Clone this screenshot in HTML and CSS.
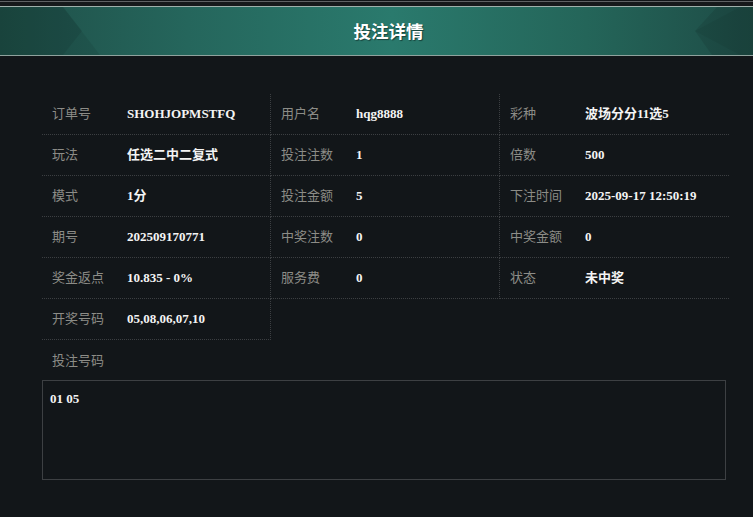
FILE: index.html
```html
<!DOCTYPE html>
<html lang="zh">
<head>
<meta charset="utf-8">
<link rel="stylesheet" href="styles.css">
</head>
<body>
<div class="page">
  <div class="topbar"></div>
  <div class="header">
    <svg class="deco" width="753" height="48" viewBox="0 0 753 48" preserveAspectRatio="none">
      <polygon points="0,0 63,0 100,48 0,48" fill="#000" fill-opacity="0.07"/>
      <polygon points="0,0 63,0 82,24 63,48 0,48" fill="#000" fill-opacity="0.08"/>
      <polygon points="753,0 717,0 695,24 712,48 753,48" fill="#000" fill-opacity="0.09"/>
      <polygon points="753,0 740,0 695,24 740,48 753,48" fill="#000" fill-opacity="0.05"/>
    </svg>
    <h1 class="title">投注详情</h1>
  </div>
  <div class="content">
    <div class="grid">
      <div class="cell c1"><span class="lbl">订单号</span><span class="val">SHOHJOPMSTFQ</span></div>
      <div class="cell c2"><span class="lbl">用户名</span><span class="val">hqg8888</span></div>
      <div class="cell c3"><span class="lbl">彩种</span><span class="val">波场分分11选5</span></div>

      <div class="cell c1"><span class="lbl">玩法</span><span class="val">任选二中二复式</span></div>
      <div class="cell c2"><span class="lbl">投注注数</span><span class="val">1</span></div>
      <div class="cell c3"><span class="lbl">倍数</span><span class="val">500</span></div>

      <div class="cell c1"><span class="lbl">模式</span><span class="val">1分</span></div>
      <div class="cell c2"><span class="lbl">投注金额</span><span class="val">5</span></div>
      <div class="cell c3"><span class="lbl">下注时间</span><span class="val">2025-09-17 12:50:19</span></div>

      <div class="cell c1"><span class="lbl">期号</span><span class="val">202509170771</span></div>
      <div class="cell c2"><span class="lbl">中奖注数</span><span class="val">0</span></div>
      <div class="cell c3"><span class="lbl">中奖金额</span><span class="val">0</span></div>

      <div class="cell c1"><span class="lbl">奖金返点</span><span class="val">10.835 - 0%</span></div>
      <div class="cell c2"><span class="lbl">服务费</span><span class="val">0</span></div>
      <div class="cell c3"><span class="lbl">状态</span><span class="val">未中奖</span></div>

      <div class="cell c1"><span class="lbl">开奖号码</span><span class="val">05,08,06,07,10</span></div>
    </div>
    <div class="section-label">投注号码</div>
    <div class="codes">01 05</div>
  </div>
</div>
</body>
</html>
```

FILE: styles.css
```css
html, body {
  margin: 0;
  padding: 0;
  background: #121619;
}
.page {
  padding-top: 1px;
  width: 753px;
}
.topbar {
  height: 4px;
  border-top: 1px solid #5f6264;
  background: #16191b;
}
.header {
  position: relative;
  height: 48px;
  border-top: 1px solid #9fb0ab;
  border-bottom: 1px solid #8fa29d;
  background: linear-gradient(90deg, #1f4f48 0%, #25665c 25%, #2a7a6d 52%, #246559 78%, #1e4c46 100%);
  display: flex;
  align-items: center;
  justify-content: center;
}
.deco {
  position: absolute;
  left: 0;
  top: 0;
}
.title {
  position: relative;
  margin: 0;
  padding-left: 24px;
  font-family: "Noto Sans CJK SC", "Noto Sans", sans-serif;
  font-size: 17.5px;
  font-weight: 700;
  color: #ffffff;
  text-shadow: 1px 1px 1px rgba(0, 0, 0, 0.45);
  line-height: 24px;
}
.content {
  padding: 38px 0 0 42px;
}
.grid {
  display: grid;
  grid-template-columns: 229px 229px 229px;
  width: 687px;
}
.cell {
  box-sizing: border-box;
  height: 41px;
  border-bottom: 1px dotted #3c3f42;
  display: flex;
  align-items: baseline;
  padding: 9px 0 0 10px;
}
.c1, .c2 {
  border-right: 1px dotted #3c3f42;
}
.lbl {
  width: 75px;
  flex: none;
  font-family: "Noto Sans CJK SC", "Noto Sans", sans-serif;
  font-size: 13px;
  color: #8c8c87;
}
.val {
  font-family: "Liberation Serif", "Noto Sans CJK SC", serif;
  font-size: 13px;
  font-weight: 700;
  color: #f4f4f4;
}
.section-label {
  margin-top: 10px;
  padding-left: 10px;
  line-height: 20px;
  font-family: "Noto Sans CJK SC", "Noto Sans", sans-serif;
  font-size: 13px;
  color: #8c8c87;
}
.codes {
  box-sizing: border-box;
  margin-top: 10px;
  width: 684px;
  height: 100px;
  border: 1px solid #3d4043;
  padding: 10px 7px;
  line-height: 16px;
  font-family: "Liberation Serif", serif;
  font-size: 13px;
  font-weight: 700;
  color: #f4f4f4;
}
```
